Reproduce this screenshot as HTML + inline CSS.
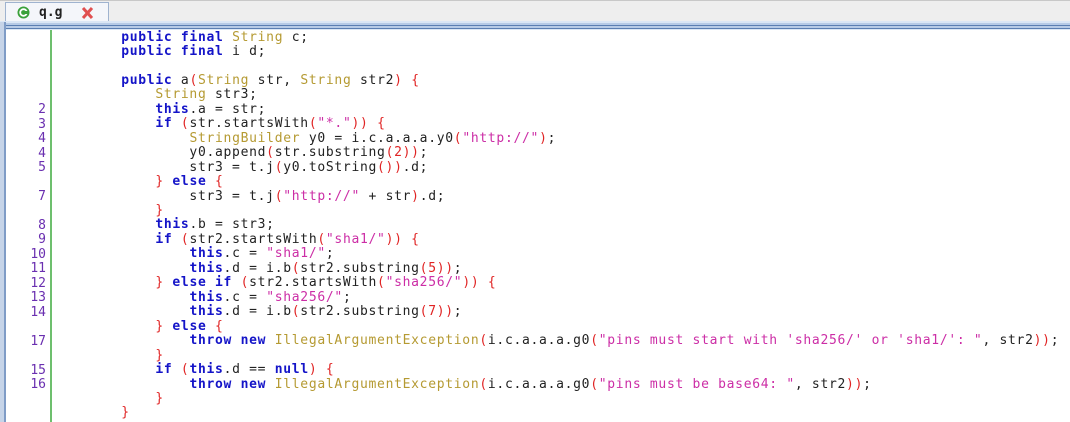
<!DOCTYPE html>
<html><head><meta charset="utf-8"><style>
html,body{margin:0;padding:0;width:1070px;height:422px;overflow:hidden;background:#fff;font-family:"DejaVu Sans Mono","Liberation Mono",monospace;}
.top{position:absolute;left:0;top:0;width:1070px;height:22px;background:#eeeeee;border-top:1px solid #c8c8c8;box-sizing:border-box;}
.tab{position:absolute;left:5px;top:2px;width:104px;height:21px;background:#f4f6fa;border:1px solid #9fb3cf;border-bottom:none;box-sizing:border-box;font:bold 13px "DejaVu Sans Mono",monospace;color:#222;}
.stripe{position:absolute;left:0;width:1070px;}
.gl{position:absolute;left:50px;top:30px;width:2px;height:392px;background:#6dbf6d;}
.ln{position:absolute;left:6px;width:40px;text-align:right;font-size:13px;color:#6a2fb0;line-height:15px;}
.code{position:absolute;left:53px;white-space:pre;font-size:13px;letter-spacing:0.7px;color:#222;line-height:15px;}
.k{color:#1414c8;font-weight:bold}
.t{color:#b59a32}
.s{color:#cc2ea6}
.p{color:#e02424}
</style></head><body>
<div class="top"></div>
<div class="tab"><svg style="position:absolute;left:11px;top:3px" width="13" height="13" viewBox="0 0 13 13"><circle cx="6.5" cy="6.5" r="6" fill="#3aa13a"/><circle cx="6.5" cy="6.5" r="3.3" fill="none" stroke="#fff" stroke-width="1.8"/><rect x="7" y="5" width="4" height="3" fill="#3aa13a"/></svg><span style="position:absolute;left:33px;top:2px">q.g</span><svg style="position:absolute;left:75px;top:4px" width="13" height="12" viewBox="0 0 13 12"><path d="M2 1L11 11M11 1L2 11" stroke="#e05050" stroke-width="3"/></svg></div>
<div class="stripe" style="top:21px;height:2px;background:#dbe7f5"></div>
<div class="stripe" style="top:23px;height:2px;background:#b7cbe6"></div>
<div class="stripe" style="top:25px;height:1px;background:#5b7fb2"></div>
<div class="stripe" style="top:26px;height:2px;background:#b7cbe6"></div>
<div class="stripe" style="top:28px;height:1px;background:#5b7fb2"></div>
<div class="stripe" style="top:29px;height:1px;background:#dbe7f5"></div>
<div style="position:absolute;left:0;top:22px;width:4px;height:400px;background:#c6d4e8"></div>
<div style="position:absolute;left:4px;top:22px;width:2px;height:400px;background:#7f9cc6"></div>
<div class="gl"></div>
<div id="c"></div>
<script>
var L=[
["","        <span class=k>public final</span> <span class=t>String</span> c;"],
["","        <span class=k>public final</span> i d;"],
["",""],
["","        <span class=k>public</span> a<span class=p>(</span><span class=t>String</span> str, <span class=t>String</span> str2<span class=p>)</span> <span class=p>{</span>"],
["","            <span class=t>String</span> str3;"],
["2","            <span class=k>this</span>.a = str;"],
["3","            <span class=k>if</span> <span class=p>(</span>str.startsWith<span class=p>(</span><span class=s>\"*.\"</span><span class=p>))</span> <span class=p>{</span>"],
["4","                <span class=t>StringBuilder</span> y0 = i.c.a.a.a.y0<span class=p>(</span><span class=s>\"http://\"</span><span class=p>)</span>;"],
["4","                y0.append<span class=p>(</span>str.substring<span class=p>(2))</span>;"],
["5","                str3 = t.j<span class=p>(</span>y0.toString<span class=p>())</span>.d;"],
["","            <span class=p>}</span> <span class=k>else</span> <span class=p>{</span>"],
["7","                str3 = t.j<span class=p>(</span><span class=s>\"http://\"</span> + str<span class=p>)</span>.d;"],
["","            <span class=p>}</span>"],
["8","            <span class=k>this</span>.b = str3;"],
["9","            <span class=k>if</span> <span class=p>(</span>str2.startsWith<span class=p>(</span><span class=s>\"sha1/\"</span><span class=p>))</span> <span class=p>{</span>"],
["10","                <span class=k>this</span>.c = <span class=s>\"sha1/\"</span>;"],
["11","                <span class=k>this</span>.d = i.b<span class=p>(</span>str2.substring<span class=p>(5))</span>;"],
["12","            <span class=p>}</span> <span class=k>else if</span> <span class=p>(</span>str2.startsWith<span class=p>(</span><span class=s>\"sha256/\"</span><span class=p>))</span> <span class=p>{</span>"],
["13","                <span class=k>this</span>.c = <span class=s>\"sha256/\"</span>;"],
["14","                <span class=k>this</span>.d = i.b<span class=p>(</span>str2.substring<span class=p>(7))</span>;"],
["","            <span class=p>}</span> <span class=k>else</span> <span class=p>{</span>"],
["17","                <span class=k>throw new</span> <span class=t>IllegalArgumentException</span><span class=p>(</span>i.c.a.a.a.g0<span class=p>(</span><span class=s>\"pins must start with 'sha256/' or 'sha1/': \"</span>, str2<span class=p>))</span>;"],
["","            <span class=p>}</span>"],
["15","            <span class=k>if</span> <span class=p>(</span><span class=k>this</span>.d == <span class=k>null</span><span class=p>)</span> <span class=p>{</span>"],
["16","                <span class=k>throw new</span> <span class=t>IllegalArgumentException</span><span class=p>(</span>i.c.a.a.a.g0<span class=p>(</span><span class=s>\"pins must be base64: \"</span>, str2<span class=p>))</span>;"],
["","            <span class=p>}</span>"],
["","        <span class=p>}</span>"]];
var h="";
for(var i=0;i<L.length;i++){var y=29.5+i*14.46;
h+='<div class="ln" style="top:'+(y+0.5)+'px">'+L[i][0]+'</div><div class="code" style="top:'+y+'px">'+L[i][1]+'</div>';}
document.getElementById('c').innerHTML=h;
</script>
</body></html>
